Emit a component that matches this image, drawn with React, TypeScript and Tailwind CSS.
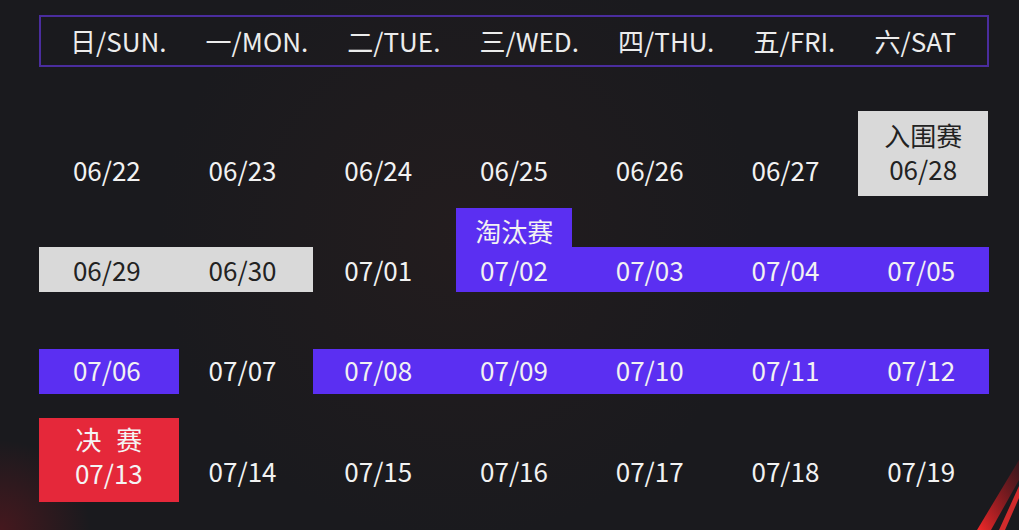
import React from "react";

const font = { fontFamily: '"Noto Sans CJK SC", "Noto Sans", sans-serif' };

function Cell({ text, className = "" }: { text: string; className?: string }) {
  return (
    <div className={"flex items-center justify-center text-[26px] leading-none text-[#f2f2f2] " + className}>
      {text}
    </div>
  );
}

export default function App() {
  const heads = ["日/SUN.", "一/MON.", "二/TUE.", "三/WED.", "四/THU.", "五/FRI.", "六/SAT"];
  return (
    <div
      style={font}
      className="relative w-[1019px] h-[530px] overflow-hidden bg-[#1a1a1e] bg-[radial-gradient(circle_at_0%_100%,rgba(150,20,30,0.35),transparent_90px),radial-gradient(circle_at_45%_45%,rgba(60,35,30,0.25),transparent_300px)]"
    >
      <svg className="absolute right-0 bottom-0" width="60" height="80" viewBox="0 0 60 80">
        <defs>
          <linearGradient id="rg" x1="0" y1="1" x2="1" y2="0">
            <stop offset="0" stopColor="#ff2a2a" stopOpacity="0.95" />
            <stop offset="1" stopColor="#b0101a" stopOpacity="0.2" />
          </linearGradient>
        </defs>
        <path d="M60 10 L60 30 L32 80 L18 80 Z" fill="url(#rg)" />
        <path d="M60 36 L60 48 L46 80 L40 80 Z" fill="#ff3030" opacity="0.8" />
      </svg>
      <div className="relative ml-[39px] w-[950px]">
        <div className="mt-[15px] h-[52px] border-2 border-[#4a2d9e] flex items-center justify-between pl-[29px] pr-[31px] text-[26px] leading-none text-[#ececec]">
          {heads.map((h) => (
            <span key={h}>{h}</span>
          ))}
        </div>

        {/* Row 1 */}
        <div className="grid grid-cols-7 h-[129px] items-end">
          {["06/22", "06/23", "06/24", "06/25", "06/26", "06/27"].map((d) => (
            <Cell key={d} text={d} className="h-[52px]" />
          ))}
          <div className="h-[85px] ml-[5px] mr-[1px] bg-[#d9d9d9] text-[#222] text-[26px] leading-[34px] flex flex-col items-center pt-[7px]">
            <span className="block">入围赛</span>
            <span className="block">06/28</span>
          </div>
        </div>

        {/* Row 2 */}
        <div className="grid grid-cols-7 grid-rows-[39px_45px] h-[96px] pt-[12px]">
          <div className="col-start-1 col-span-2 row-start-2 -mr-[3px] bg-[#d9d9d9]" />
          <div className="col-start-4 row-start-1 ml-[10px] w-[116px] justify-self-start bg-[#5b2ff2] flex items-center justify-center pt-[6px] text-[26px] leading-none text-[#f2f2f2]">
            淘汰赛
          </div>
          <div className="col-start-4 col-span-4 row-start-2 ml-[10px] bg-[#5b2ff2]" />
          <Cell text="06/29" className="col-start-1 row-start-2 !text-[#222]" />
          <Cell text="06/30" className="col-start-2 row-start-2 !text-[#222]" />
          <Cell text="07/01" className="col-start-3 row-start-2" />
          <Cell text="07/02" className="col-start-4 row-start-2" />
          <Cell text="07/03" className="col-start-5 row-start-2" />
          <Cell text="07/04" className="col-start-6 row-start-2" />
          <Cell text="07/05" className="col-start-7 row-start-2" />
        </div>

        {/* Row 3 */}
        <div className="grid grid-cols-7 grid-rows-[45px] h-[102px] content-end">
          <div className="col-start-1 row-start-1 -mr-[4px] bg-[#5b2ff2]" />
          <div className="col-start-3 col-span-5 row-start-1 ml-[3px] bg-[#5b2ff2]" />
          {["07/06", "07/07", "07/08", "07/09", "07/10", "07/11", "07/12"].map((d, i) => (
            <Cell key={d} text={d} className={"row-start-1 pb-[3px] " + ["col-start-1", "col-start-2", "col-start-3", "col-start-4", "col-start-5", "col-start-6", "col-start-7"][i]} />
          ))}
        </div>

        {/* Row 4 */}
        <div className="grid grid-cols-7 h-[108px] items-end">
          <div className="h-[84px] -mr-[4px] bg-[#e5283a] text-[#f4f4f4] text-[26px] leading-[34px] flex flex-col items-center pt-[4px]">
            <span className="block whitespace-pre [word-spacing:9px]">决 赛</span>
            <span className="block">07/13</span>
          </div>
          {["07/14", "07/15", "07/16", "07/17", "07/18", "07/19"].map((d) => (
            <Cell key={d} text={d} className="h-[62px]" />
          ))}
        </div>
      </div>
    </div>
  );
}
